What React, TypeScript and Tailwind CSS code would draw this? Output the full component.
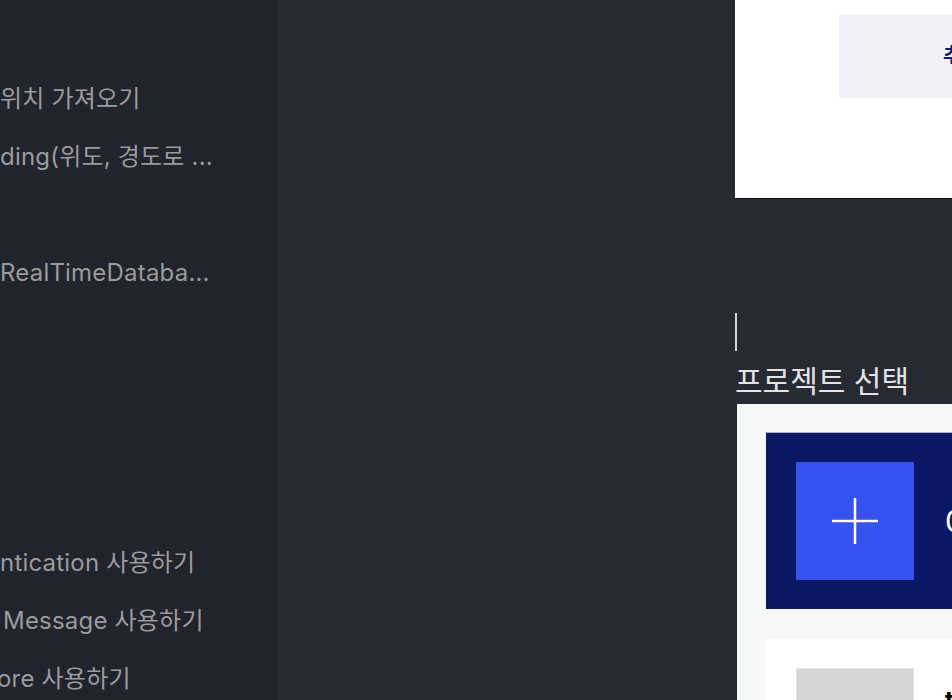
const items = [
  '',
  '위치 가져오기',
  'ding(위도, 경도로 ...',
  '',
  'RealTimeDataba...',
  '',
  '',
  '',
  '',
  'ntication 사용하기',
  'Message 사용하기',
  'ore 사용하기',
];

const Sidebar = () => (
  <aside className="w-[277px] shrink-0 bg-[#21242c] pt-[12px]">
    {items.map((label, i) => (
      <div
        key={i}
        className={`flex h-[58px] items-center whitespace-pre text-[24px] tracking-[0.2px] text-[#9b9b9b] ${
          i === 10 ? 'pl-[3px]' : i === 11 ? '-ml-[3px]' : ''
        }`}
      >
        {label}
      </div>
    ))}
  </aside>
);

const Plus = () => (
  <svg width="46" height="46" viewBox="0 0 46 46" fill="none">
    <path d="M23 0v46M0 23h46" stroke="#fff" strokeWidth="2.5" />
  </svg>
);

const App = () => {
  return (
    <div
      className="flex h-[700px] w-[952px] overflow-hidden bg-[#282a33]"
      style={{ fontFamily: 'Inter, "Noto Sans CJK KR", sans-serif' }}
    >
      <Sidebar />
      <main className="flex-1 overflow-hidden pl-[458px]">
        <div className="w-[700px]">
          <section className="h-[199px] border-b border-[#111] bg-white pt-[15px] pl-[104px]">
            <button className="flex h-[83px] w-[420px] items-center bg-[#f1f2f8] pl-[104px] text-[19px] font-bold text-[#0f1e78]">
              추가하기
            </button>
          </section>

          <div className="mt-[114px] h-[38px] w-[2px] bg-[#d4d4d4]" />
          <h2 className="mt-[13px] text-[30px] leading-[34px] text-[#e4e4e4]">프로젝트 선택</h2>

          <div className="ml-[2px] mt-[6px] bg-[#f6f7f7] pl-[29px] pt-[28px]">
            <div className="flex h-[177px] items-center gap-[31px] border-t border-[#a9b0cc] bg-[#0a1866] pl-[30px]">
              <div className="flex h-[118px] w-[118px] items-center justify-center bg-[#3652f0]">
                <Plus />
              </div>
              <span className="text-[30px] text-white">0개의 프로젝트</span>
            </div>
            <div className="mt-[30px] flex h-[120px] gap-[31px] bg-white pl-[30px] pt-[29px]">
              <div className="h-[90px] w-[118px] border border-[#e2e2e2] bg-[#d6d6d6]" />
              <span className="pt-[14px] text-[24px] font-bold text-black">test</span>
            </div>
          </div>
        </div>
      </main>
    </div>
  );
};

export default App;
